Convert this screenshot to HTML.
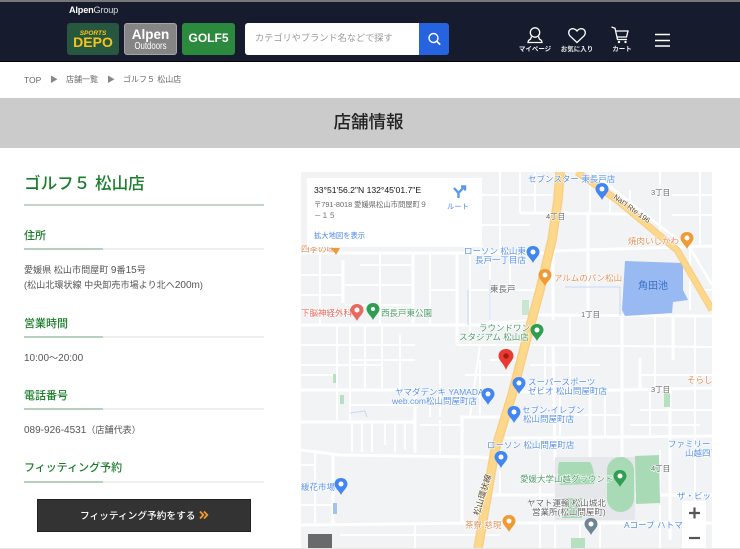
<!DOCTYPE html>
<html lang="ja"><head><meta charset="utf-8"><title>ゴルフ5 松山店</title>
<style>
*{box-sizing:border-box;margin:0;padding:0}
html,body{width:740px;height:549px;overflow:hidden;background:#fff}
body{font-family:"Liberation Sans","Noto Sans CJK JP",sans-serif;position:relative;color:#444}
.a{position:absolute;white-space:nowrap}
.hdr{position:absolute;left:0;top:0;width:740px;height:62px;background:#161c2d;border-top:2px solid #777;border-bottom:1px solid #000}
.logo{position:absolute;top:23px;height:32px;border-radius:3px;text-align:center}
.h2{position:absolute;left:24px;width:240px;height:23px;padding-top:1px;color:#1b7d2b;font-size:11px;font-weight:500;line-height:16px;white-space:nowrap;border-bottom:2px solid #eef0ee}
.h2:after{content:"";position:absolute;left:0;bottom:-2px;width:79px;height:2px;background:#b9cfbe}
.t{position:absolute;left:24px;font-size:9.1px;color:#555;white-space:nowrap}
.t b{font-weight:400;font-size:10px}
.lb text{paint-order:stroke;stroke:#fff;stroke-width:1.2px;font-size:8.5px}
</style></head><body>
<div class="hdr"></div>
<div class="a" style="left:69px;top:4px;font-size:9.200px;line-height:12px;color:#fff;font-weight:700;letter-spacing:-.2px">Alpen<span style="font-weight:400;color:#ddd">Group</span></div>
<div class="logo" style="left:67px;width:52px;background:#27573f;color:#f5c518;font-weight:700">
<div class="a" style="left:0;width:52px;top:7px;font-size:6.500px;line-height:7px;font-style:italic">SPORTS</div>
<div class="a" style="left:0;width:52px;top:13px;font-size:14px;line-height:13px">DEPO</div></div>
<div class="logo" style="left:124px;width:53px;background:#858585;border:1px solid #a5a5a5;color:#fff">
<div class="a" style="left:0;width:51px;top:4px;font-size:13.500px;line-height:14px;font-weight:700">Alpen</div>
<div class="a" style="left:0;width:51px;top:17px;font-size:10px;line-height:11px;transform:scaleX(.78)">Outdoors</div></div>
<div class="logo" style="left:182px;width:53px;background:#2c8a3e;color:#fff;font-weight:700;font-size:12px;line-height:31px">GOLF5</div>
<div class="a" style="left:245px;top:23px;width:175px;height:32px;background:#fff;border-radius:3px 0 0 3px;font-size:9.200px;line-height:31px;padding-left:10px;color:#999">カテゴリやブランド名などで探す</div>
<div class="a" style="left:419px;top:23px;width:30px;height:32px;background:#2563e0;border-radius:0 3px 3px 0"></div>
<svg class="a" style="left:0;top:0" width="740" height="62" viewBox="0 0 740 62" fill="none" stroke="#fff">
<circle cx="433.500" cy="38" r="4.500" stroke-width="1.400"/><path d="M436.700 41.200l3.500 3.500" stroke-width="1.700"/>
<circle cx="535" cy="32.500" r="4.700" stroke-width="1.300"/><path d="M531.500 36.500l-1 2.700c-1.700.6-2.500 1.700-2.500 3.300h14c0-1.600-.8-2.700-2.500-3.300l-1-2.700" stroke-width="1.300"/>
<path d="M577 42.500l-6.600-6.200c-2.300-2.300-2.200-5.200-.2-6.800 1.900-1.400 4.800-1 6.800 1.500 2-2.500 4.900-2.900 6.800-1.500 2 1.600 2.100 4.500-.2 6.800z" stroke-width="1.300"/>
<path d="M611.500 27l3.500 1.200 2.500 11.300h9.500M615.500 31h12.500l-1.500 6h-10" stroke-width="1.300"/><circle cx="619" cy="42" r="1.200" fill="#fff" stroke="none"/><circle cx="625.500" cy="42" r="1.200" fill="#fff" stroke="none"/>
<path d="M655 34.500h15M655 40.500h15M655 46h15" stroke-width="1.500"/></svg>
<div class="a" style="left:518px;top:45px;width:34px;text-align:center;font-size:6.500px;line-height:10px;color:#eee;font-weight:700">マイページ</div>
<div class="a" style="left:560px;top:45px;width:34px;text-align:center;font-size:6.500px;line-height:10px;color:#eee;font-weight:700">お気に入り</div>
<div class="a" style="left:611px;top:45px;width:22px;text-align:center;font-size:6.500px;line-height:10px;color:#eee;font-weight:700">カート</div>

<div class="a" style="left:24px;top:74px;font-size:8.500px;line-height:12px;color:#666">TOP</div>
<div class="a" style="left:50px;top:74px;font-size:8px;line-height:11px;color:#888">▶</div>
<div class="a" style="left:66px;top:74px;font-size:8px;line-height:12px;color:#666">店舗一覧</div>
<div class="a" style="left:107px;top:74px;font-size:8px;line-height:11px;color:#888">▶</div>
<div class="a" style="left:123px;top:74px;font-size:8px;line-height:12px;color:#666">ゴルフ５ 松山店</div>

<div class="a" style="left:0;top:98px;width:740px;height:50px;background:#cbcbcb;text-align:center;font-size:17.500px;line-height:49px;font-weight:500;color:#222;padding-right:3px">店舗情報</div>

<div class="a" style="left:24px;top:172px;font-size:16.600px;line-height:24px;font-weight:500;color:#1b7d2b">ゴルフ５ 松山店</div>
<div class="a" style="left:24px;top:204px;width:240px;height:2px;background:#c5d6c9"></div>
<div class="h2" style="top:227px">住所</div>
<div class="t" style="top:263px;line-height:14px">愛媛県 松山市問屋町 <b>9</b>番<b>15</b>号</div>
<div class="t" style="top:278px;line-height:14px">(松山北環状線 中央卸売市場より北へ<b>200m</b>)</div>
<div class="h2" style="top:315px">営業時間</div>
<div class="t" style="top:351px;line-height:14px"><b>10:00</b>～<b>20:00</b></div>
<div class="h2" style="top:387px">電話番号</div>
<div class="t" style="top:423px;line-height:14px"><b>089-926-4531</b>（店舗代表）</div>
<div class="h2" style="top:459px;height:24px">フィッティング予約</div>
<div class="a" style="left:37px;top:499px;width:214px;height:33px;background:#333;border:1px solid #222;color:#fff;font-size:9.700px;line-height:33px;font-weight:500;padding-left:42px">フィッティング予約をする</div>
<svg class="a" style="left:199px;top:510px" width="10" height="10" viewBox="0 0 10 10" fill="none" stroke="#f39a2b" stroke-width="1.800"><path d="M1 1.500L4.300 5L1 8.500M5 1.500L8.300 5L5 8.500"/></svg>

<svg class="a" style="left:301px;top:172px" width="411" height="376" viewBox="301 172 411 376" font-family="'Liberation Sans','Noto Sans CJK JP',sans-serif">
<rect x="301" y="172" width="411" height="376" fill="#f1f3f4"/>
<g fill="none" stroke="#fff" stroke-width="3">
<path d="M301 253H552M552 251L712 246M301 325H528M301 450L340 455L480 457L492 458"/>
<path d="M301 525L480 523H712M528 315L712 316M518 392L712 388M505 438L712 436M490 495L712 495M300 422H415M300 390H415M460 417H503"/>
<path d="M520 213L640 214M553 250V320M588 215V315M622 315V500M673 315V360M333 455V523M415 390V453M462 417V523M413 253V323M457 253V345M343 260V303M553 345L555 460M590 388V495M670 388V540M640 358V390"/>
</g>
<g fill="none" stroke="#fff" stroke-width="2">
<path d="M315 450V523M301 465H315M301 490H333M301 505H333M340 535H500M415 525V548M540 525V548M600 525V548"/>
<path d="M337 325V420M350 325V422M382 325V390M301 345H415M301 365H383M301 375H338M352 360H415M350 405H415"/>
<path d="M352 422V452M362 422V452M372 422V452M385 422V445M395 422V452M405 422V450M420 425H462M440 420V455"/>
<path d="M360 265H413M345 285H413M345 305H413M380 253V325M301 275H343M301 295H343M320 253V325M430 253V325M430 290H457M470 253V345M470 290H535M470 325L530 320M457 345H524M490 253V325M510 253V285"/>
<path d="M500 172V250M520 172V213M482 195H552M482 225H530M535 172V213M590 172V215M610 195V215M630 190V215M660 172V240M700 172V245M672 195H712M672 215H712M690 250V310M700 290H712"/>
<path d="M530 365H600M530 345L712 347M570 315V390M590 315V345M655 316V392M695 316V540M545 345V392M640 375H712M560 392V438M605 390V438M650 392V438M640 410H712M630 425H700M560 415H622M540 438V525M540 475H555M500 470V495M555 522V548M580 525V548M660 505V548M660 450V495"/>
<path d="M430 392V417M440 360V417M400 335V390M365 325V390M480 360V415M480 345L470 417M490 360H517M465 375H510"/>
</g>
<path d="M350 413L365 411L367 417M468 290V325M490 280V320M565 287H620M620 287V316" fill="none" stroke="#c6d8f8" stroke-width="1"/>
<path d="M625 261L683 263V290L688 300L673 302L672 313L625 316L622 310Z" fill="#98b9f2"/>
<rect x="333" y="503" width="4" height="11" fill="#a1c2f5"/>
<rect x="333" y="374" width="3" height="9" fill="#b7e0c0"/><rect x="340" y="395" width="4" height="9" fill="#b7e0c0"/>
<rect x="522" y="300" width="7" height="15" fill="#c9e6d0"/><rect x="664" y="393" width="6" height="14" fill="#b7e0c0"/><rect x="571" y="538" width="14" height="10" fill="#b7e0c0"/>
<path d="M555 457H635V520H555Z" fill="#e5e7ea"/>
<path d="M559 462H590C594 468 595 478 594 484L560 485C558 478 557 470 559 462Z" fill="#a8dab5"/>
<rect x="607" y="457" width="27" height="55" rx="13.500" fill="#a8dab5"/>
<path d="M635 456L659 455L660 503L636 504Z" fill="#a8dab5"/>
<rect x="562" y="498" width="20" height="20" fill="#a8dab5"/>
<path d="M560 172L558 200L552 240L540 290L525 345L512 395L495 450L478 549" fill="none" stroke="#f6cd82" stroke-width="9.500"/>
<path d="M560 172L558 200L552 240L540 290L525 345L512 395L495 450L478 549" fill="none" stroke="#fdd78a" stroke-width="7"/>
<path d="M577 172L617 200L653 230L677 250L712 310" fill="none" stroke="#f6cd82" stroke-width="7"/>
<path d="M577 172L617 200L653 230L677 250L712 310" fill="none" stroke="#fdd78a" stroke-width="5"/>
<path d="M592 172L617 192L660 226L690 248L712 285" fill="none" stroke="#fff" stroke-width="2.500"/>
<g class="lb">
<g fill="#5a90e8">
<text x="528" y="182">セブンスター 東長戸店</text>
<text x="464" y="254">ローソン 松山東</text>
<text x="475" y="263">長戸一丁目店</text>
<text x="395" y="395">ヤマダデンキ YAMADA</text>
<text x="392" y="404">web.com松山問屋町店</text>
<text x="528" y="385">スーパースポーツ</text>
<text x="528" y="394">ゼビオ 松山問屋町店</text>
<text x="522" y="413">セブン-イレブン</text>
<text x="523" y="422">松山問屋町店</text>
<text x="487" y="448">ローソン 松山問屋町店</text>
<text x="668" y="447">ファミリー</text>
<text x="685" y="456">山越四丁</text>
<text x="677" y="499">ザ・ビッ</text>
<text x="624" y="528">Aコープ ハトマート</text>
<text x="301" y="490">緩花市場</text>
</g>
<g fill="#e0905a">
<text x="628" y="244">焼肉いしかわ</text>
<text x="554" y="281">アルムのパン松山</text>
<text x="687" y="383">そらし</text>
<text x="465" y="528">茶寮 慈現</text>
<text x="301" y="252">四季の味</text>
</g>
<g fill="#e66a60"><text x="301" y="316">下脳神経外科</text></g>
<g fill="#4f9a6a">
<text x="381" y="316">西長戸東公園</text>
<text x="479" y="331">ラウンドワン</text>
<text x="459" y="340">スタジアム 松山店</text>
<text x="520" y="482">愛媛大学山越グラウンド</text>
</g>
<g fill="#666">
<text x="490" y="292">東長戸</text>
<text x="651" y="195" style="font-size:7.500px">3丁目</text>
<text x="546" y="219" style="font-size:7.500px">4丁目</text>
<text x="581" y="317" style="font-size:7.500px">1丁目</text>
<text x="651" y="392" style="font-size:7.500px">3丁目</text>
<text x="651" y="471" style="font-size:7.500px">4丁目</text>
<text x="527" y="506">ヤマト運輸 松山城北</text>
<text x="532" y="515">営業所(松山問屋町)</text>
</g>
<text x="638" y="289" style="font-size:10px;stroke:none" fill="#3a6fc4">角田池</text>
<text transform="translate(613 198) rotate(36)" style="font-size:7.500px" fill="#5a4a2a">Nat'l Rte 196</text>
<text transform="translate(479 516) rotate(-73)" style="font-size:8.500px" fill="#5a4a2a">松山環状線</text>
</g>
<g>
<path d="M602 183c-4 0-6.500 2.800-6.500 6 0 4 4.500 6.500 6.500 11 2-4.500 6.500-7 6.500-11 0-3.200-2.500-6-6.500-6z" fill="#4285f4"/>
<path d="M488 388c-4 0-6.500 2.800-6.500 6 0 4 4.500 6.500 6.500 11 2-4.500 6.500-7 6.500-11 0-3.200-2.500-6-6.500-6z" fill="#4285f4"/>
<path d="M533 246c-4 0-6.500 2.800-6.500 6 0 4 4.500 6.500 6.500 11 2-4.500 6.500-7 6.500-11 0-3.200-2.500-6-6.500-6z" fill="#4285f4"/>
<path d="M519 377c-4 0-6.500 2.800-6.500 6 0 4 4.500 6.500 6.500 11 2-4.500 6.500-7 6.500-11 0-3.200-2.500-6-6.500-6z" fill="#4285f4"/>
<path d="M514 406c-4 0-6.500 2.800-6.500 6 0 4 4.500 6.500 6.500 11 2-4.500 6.500-7 6.500-11 0-3.200-2.500-6-6.500-6z" fill="#4285f4"/>
<path d="M501 451c-4 0-6.500 2.800-6.500 6 0 4 4.500 6.500 6.500 11 2-4.500 6.500-7 6.500-11 0-3.200-2.500-6-6.500-6z" fill="#4285f4"/>
<path d="M341 478c-4 0-6.500 2.800-6.500 6 0 4 4.500 6.500 6.500 11 2-4.500 6.500-7 6.500-11 0-3.200-2.500-6-6.500-6z" fill="#4285f4"/>
<path d="M687 232c-4 0-6.500 2.800-6.500 6 0 4 4.500 6.500 6.500 11 2-4.500 6.500-7 6.500-11 0-3.200-2.500-6-6.500-6z" fill="#f09a35"/>
<path d="M545 269c-4 0-6.500 2.800-6.500 6 0 4 4.500 6.500 6.500 11 2-4.500 6.500-7 6.500-11 0-3.200-2.500-6-6.500-6z" fill="#f09a35"/>
<path d="M509 515c-4 0-6.500 2.800-6.500 6 0 4 4.500 6.500 6.500 11 2-4.500 6.500-7 6.500-11 0-3.200-2.500-6-6.500-6z" fill="#f09a35"/>
<path d="M332 248h8l-4 7z" fill="#f09a35"/>
<path d="M357 304c-4 0-6.500 2.800-6.500 6 0 4 4.500 6.500 6.500 11 2-4.500 6.500-7 6.500-11 0-3.200-2.500-6-6.500-6z" fill="#e66a60"/>
<path d="M373 303c-4 0-6.500 2.800-6.500 6 0 4 4.500 6.500 6.500 11 2-4.500 6.500-7 6.500-11 0-3.200-2.500-6-6.500-6z" fill="#2f9e52"/>
<path d="M537 324c-4 0-6.500 2.800-6.500 6 0 4 4.500 6.500 6.500 11 2-4.500 6.500-7 6.500-11 0-3.200-2.500-6-6.500-6z" fill="#2f9e52"/>
<path d="M620 470c-4 0-6.500 2.800-6.500 6 0 4 4.500 6.500 6.500 11 2-4.500 6.500-7 6.500-11 0-3.200-2.500-6-6.500-6z" fill="#2f9e52"/>
<path d="M591 518c-4 0-6.500 2.800-6.500 6 0 4 4.500 6.500 6.500 11 2-4.500 6.500-7 6.500-11 0-3.200-2.500-6-6.500-6z" fill="#6e8593"/>
<g fill="#fff"><circle cx="602" cy="189" r="2.500"/><circle cx="488" cy="394" r="2.500"/><circle cx="533" cy="252" r="2.500"/><circle cx="519" cy="383" r="2.500"/><circle cx="514" cy="412" r="2.500"/><circle cx="501" cy="457" r="2.500"/><circle cx="341" cy="484" r="2.500"/><circle cx="687" cy="238" r="2.500"/><circle cx="545" cy="275" r="2.500"/><circle cx="509" cy="521" r="2.500"/><circle cx="357" cy="310" r="2.500"/><circle cx="373" cy="309" r="2"/><circle cx="537" cy="330" r="2.500"/><circle cx="620" cy="476" r="2.500"/><circle cx="591" cy="524" r="2.500"/></g>
<path d="M506 349c-4.300 0-7.500 3-7.500 7 0 4.500 5.500 7.500 7.500 14 2-6.500 7.500-9.500 7.500-14 0-4-3.200-7-7.500-7z" fill="#ea3a30"/><circle cx="506" cy="356" r="2.700" fill="#a31b15"/>
</g>
<rect x="308" y="534" width="24" height="14" fill="#6a6a6a"/>
<rect x="682" y="501" width="24" height="47" fill="#fff"/>
<path d="M689 513h11M694.500 507.500v11" stroke="#555" stroke-width="2.200"/>
<path d="M689 538h11" stroke="#555" stroke-width="2.200"/>
<rect x="307" y="178" width="175" height="69" fill="#fff"/>
<text x="314" y="193" font-size="8.600" fill="#111">33°51'56.2"N 132°45'01.7"E</text>
<text x="314" y="207" font-size="7.300" fill="#666">〒791-8018 愛媛県松山市問屋町９</text>
<text x="314" y="218" font-size="7.300" fill="#666">－１５</text>
<text x="314" y="238" font-size="7.300" fill="#4a86e8">拡大地図を表示</text>
<text x="447" y="209" font-size="7.300" fill="#4a86e8">ルート</text>
<path d="M458.500 198V193L454 188M458.500 193L464 187M461 186.500H465V190.500" fill="none" stroke="#5b96f0" stroke-width="2.400"/>
</svg>
<div class="a" style="left:0;top:548px;width:740px;height:1px;background:#e6e6e6"></div>
</body></html>
